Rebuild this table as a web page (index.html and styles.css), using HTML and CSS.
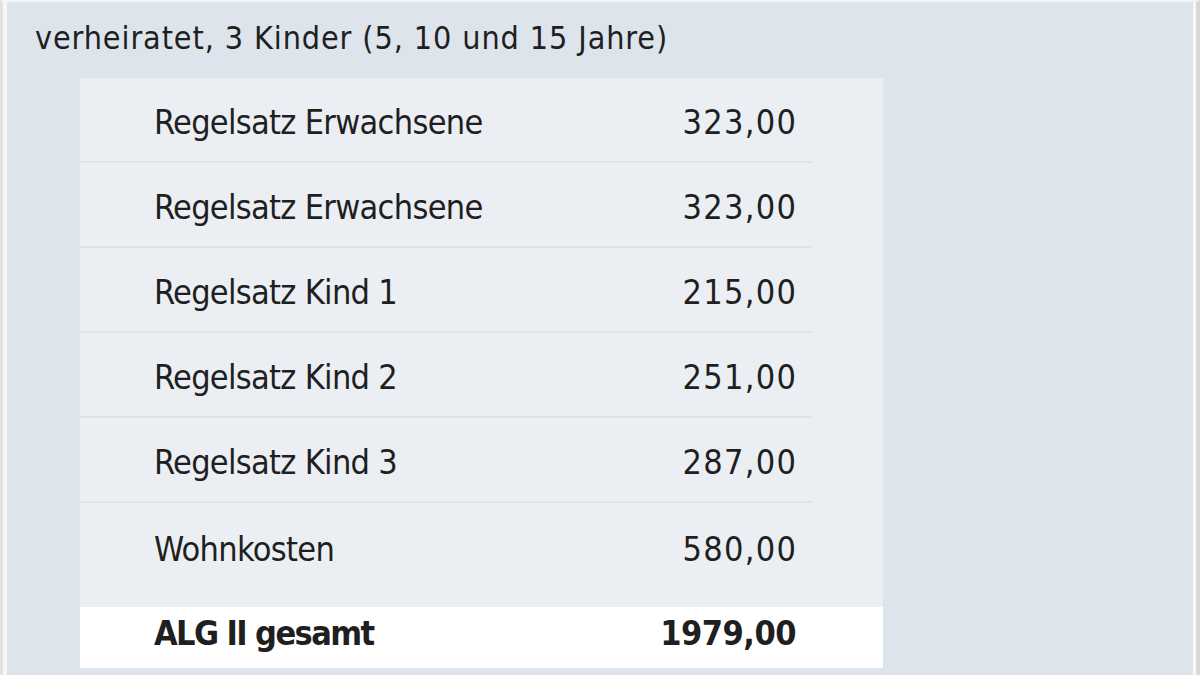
FILE: index.html
```html
<!DOCTYPE html>
<html lang="de">
<head>
<meta charset="utf-8">
<link rel="stylesheet" href="styles.css">
</head>
<body>
<div class="frame">
  <div class="caption">verheiratet, 3 Kinder (5, 10 und 15 Jahre)</div>
  <div class="panel">
    <div class="row"><span class="label">Regelsatz Erwachsene</span><span class="value">323,00</span></div>
    <div class="row"><span class="label">Regelsatz Erwachsene</span><span class="value">323,00</span></div>
    <div class="row"><span class="label">Regelsatz Kind 1</span><span class="value">215,00</span></div>
    <div class="row"><span class="label">Regelsatz Kind 2</span><span class="value">251,00</span></div>
    <div class="row"><span class="label">Regelsatz Kind 3</span><span class="value">287,00</span></div>
    <div class="row last"><span class="label">Wohnkosten</span><span class="value">580,00</span></div>
    <div class="total"><div class="total-inner"><span class="label">ALG II gesamt</span><span class="value">1979,00</span></div></div>
  </div>
</div>
</body>
</html>
```
FILE: styles.css
```css
html, body {
  margin: 0;
  padding: 0;
  background: #ffffff;
}
body {
  width: 1200px;
  height: 675px;
  overflow: hidden;
  font-family: "DejaVu Sans Condensed", "Liberation Sans", sans-serif;
  color: #1f1f22;
}
.frame {
  box-sizing: border-box;
  width: 1200px;
  height: 675px;
  background: #dde4ec;
  border-left: 3px solid #e4e1e1;
  border-right: 4px solid #d9d7d7;
  border-top: 2px solid #f3f4f6;
  box-shadow: inset 4px 0 0 #f7f7f8, inset -3px 0 0 #f7f7f8;
  padding-top: 16px;
}
.caption {
  font-size: 32px;
  line-height: 40px;
  letter-spacing: 0.9px;
  padding-left: 32px;
  height: 60px;
}
.panel {
  margin-left: 77px;
  width: 803px;
  background: #ebeff3;
}
.row {
  box-sizing: border-box;
  width: 732px;
  height: 85px;
  display: flex;
  justify-content: space-between;
  align-items: center;
  padding: 5px 16px 0 74px;
  font-size: 34px;
  border-bottom: 2px solid #dfe3e8;
}
.row .label {
  letter-spacing: -0.7px;
}
.row .value {
  letter-spacing: 1.3px;
  margin-right: -1.3px;
}
.row.last {
  border-bottom: none;
  height: 104px;
  padding-bottom: 18px;
}
.total {
  background: #ffffff;
  height: 61px;
  border-bottom: 1px solid #e3e7ec;
}
.total-inner {
  box-sizing: border-box;
  width: 732px;
  height: 61px;
  display: flex;
  justify-content: space-between;
  align-items: center;
  padding: 0 16px 10px 74px;
  font-size: 34px;
  font-weight: bold;
}
.total-inner .label {
  letter-spacing: -1.6px;
}
.total-inner .value {
  letter-spacing: -0.5px;
}
```
